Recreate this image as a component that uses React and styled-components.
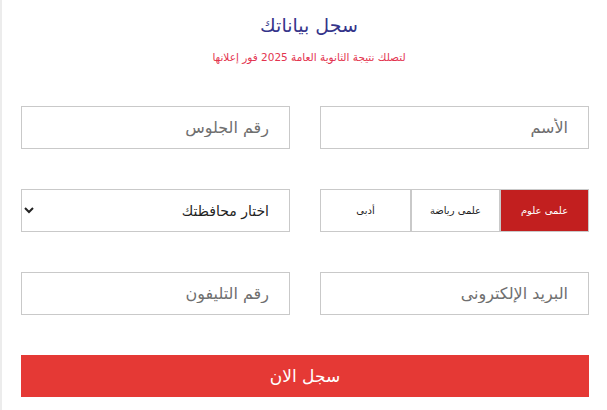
import React, { useState } from 'react';
import styled, { createGlobalStyle } from 'styled-components';

const Global = createGlobalStyle`
  html, body {
    margin: 0;
    padding: 0;
    background: #fff;
  }
  body {
    font-family: "DejaVu Sans", "Noto Sans", sans-serif;
  }
`;

const Page = styled.div`
  direction: rtl;
  min-height: 410px;
  box-sizing: border-box;
  border-left: 2px solid #ececec;
  padding: 12px 18px 0 19px;
`;

const Title = styled.h2`
  margin: 0;
  text-align: center;
  font-weight: 400;
  font-size: 19px;
  line-height: 26px;
  color: #34348a;
  padding-left: 8px;
`;

const Sub = styled.p`
  margin: 9px 0 0;
  text-align: center;
  font-size: 10.5px;
  line-height: 20px;
  color: #e3344f;
  padding-left: 8px;
`;

const Form = styled.form`
  display: grid;
  grid-template-columns: 1fr 1fr;
  column-gap: 30px;
  row-gap: 40px;
  margin-top: 39px;
`;

const Input = styled.input`
  box-sizing: border-box;
  height: 43px;
  width: 100%;
  border: 1px solid #c9c9c9;
  border-radius: 0;
  padding: 0 20px;
  font-family: inherit;
  font-size: 16px;
  color: #333;
  background: #fff;
  outline: none;
  &::placeholder {
    color: #6f6f6f;
  }
`;

const Segments = styled.div`
  display: grid;
  grid-template-columns: repeat(3, 1fr);
  height: 43px;
  border: 1px solid #c9c9c9;
  box-sizing: border-box;
`;

const Seg = styled.button`
  border: none;
  border-left: ${(p) => (p.$last ? 'none' : '2px solid #c9c9c9')};
  background: ${(p) => (p.$active ? '#c21f1f' : '#fff')};
  color: ${(p) => (p.$active ? '#fff' : '#222')};
  font-family: inherit;
  font-size: 10px;
  font-weight: 400;
  cursor: pointer;
  padding: 0;
`;

const Select = styled.select`
  box-sizing: border-box;
  height: 43px;
  width: 100%;
  border: 1px solid #c9c9c9;
  border-radius: 0;
  padding: 0 16px 0 8px;
  font-family: "DejaVu Sans", sans-serif;
  font-size: 14px;
  font-weight: 400;
  color: #222;
  background: #fff;
  outline: none;
`;

const Submit = styled.button`
  grid-column: 1 / -1;
  height: 42px;
  border: none;
  background: #e53935;
  color: #fff;
  font-family: inherit;
  font-size: 17px;
  cursor: pointer;
`;

const tracks = ['علمى علوم', 'علمى رياضة', 'أدبى'];

export default function App() {
  const [track, setTrack] = useState(0);
  return (
    <Page>
      <Global />
      <Title>سجل بياناتك</Title>
      <Sub>لتصلك نتيجة الثانوية العامة 2025 فور إعلانها</Sub>
      <Form onSubmit={(e) => e.preventDefault()}>
        <Input placeholder="الأسم" />
        <Input placeholder="رقم الجلوس" />
        <Segments>
          {tracks.map((t, i) => (
            <Seg
              key={t}
              type="button"
              $active={track === i}
              $last={i === tracks.length - 1}
              onClick={() => setTrack(i)}
            >
              {t}
            </Seg>
          ))}
        </Segments>
        <Select defaultValue="">
          <option value="">اختار محافظتك</option>
          <option>القاهرة</option>
          <option>الجيزة</option>
          <option>الإسكندرية</option>
        </Select>
        <Input placeholder="البريد الإلكترونى" />
        <Input placeholder="رقم التليفون" />
        <Submit type="submit">سجل الان</Submit>
      </Form>
    </Page>
  );
}
